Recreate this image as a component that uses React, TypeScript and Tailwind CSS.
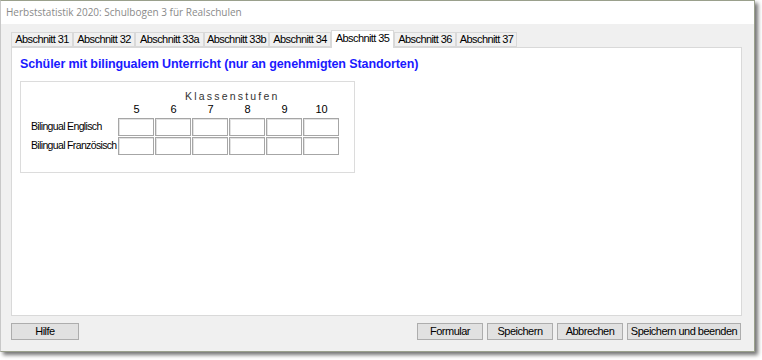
import React from "react";

const tabs = ["Abschnitt 31", "Abschnitt 32", "Abschnitt 33a", "Abschnitt 33b", "Abschnitt 34", "Abschnitt 35", "Abschnitt 36", "Abschnitt 37"];
const tabW = [62, 62, 69, 65, 62, 63, 62, 61];
const cols = ["5", "6", "7", "8", "9", "10"];

function Cell() {
  return <div className="w-[36px] h-[18px] bg-white border border-[#a6a6a6] shadow-[inset_1px_1px_0_#e3e3e3]" />;
}

function Btn({ label, w }: { label: string; w: string }) {
  return (
    <div className={`${w} h-[17px] bg-[#e1e1e1] border border-[#adadad] flex items-center justify-center text-[11px] tracking-[-0.5px] text-black`}>
      {label}
    </div>
  );
}

export default function App() {
  return (
    <div className="w-[762px] h-[360px] bg-white relative overflow-hidden" style={{ fontFamily: '"Liberation Sans", Arial, sans-serif' }}>
      <div className="w-[755px] h-[352px] border border-[#9aa08c] border-l-[#c8c8c8] bg-[#f0f0f0] shadow-[3px_3px_4px_rgba(0,0,0,0.55)] flex flex-col">
        <div className="h-[23px] bg-white flex items-center pl-[5px] text-[10px] text-[#8a8a8a]" style={{ fontFamily: '"Open Sans", "Noto Sans", sans-serif' }}>
          Herbststatistik 2020: Schulbogen 3 für Realschulen
        </div>
        <div className="flex-1 flex flex-col pl-[10px] pr-[12px] pt-[6px]">
          <div className="flex items-end h-[17px]">
            {tabs.map((t, i) => {
              const sel = i === 5;
              return (
                <div
                  key={t}
                  style={{ width: tabW[i] }}
                  className={
                    sel
                      ? "h-[18px] -mb-[1px] bg-white border border-b-0 border-[#d9d9d9] flex items-center justify-center text-[11px] tracking-[-0.6px] text-black relative z-10 pb-[2px]"
                      : "h-[15px] bg-[#f0f0f0] border border-[#d9d9d9] flex items-center justify-center text-[11px] tracking-[-0.6px] text-black"
                  }
                >
                  {t}
                </div>
              );
            })}
          </div>
          <div className="h-[269px] bg-white border border-[#d9d9d9] pl-[8px] pt-[8px]">
            <div className="text-[12.5px] font-bold text-[#1a1aff] tracking-[-0.1px] leading-[16px]">
              Schüler mit bilingualem Unterricht (nur an genehmigten Standorten)
            </div>
            <div className="mt-[9px] w-[335px] h-[92px] border border-[#dcdcdc] pt-[8px]">
              <div className="text-[10.5px] tracking-[2.2px] text-[#333] pl-[164px] leading-[12px]">Klassenstufen</div>
              <div className="flex pl-[97px] mt-[1px] leading-[13px] text-[11px] text-black">
                {cols.map((c) => (
                  <div key={c} className="w-[37px] text-center">{c}</div>
                ))}
              </div>
              <div className="flex flex-col gap-[1px] mt-[2px]">
                {["Bilingual Englisch", "Bilingual Französisch"].map((r) => (
                  <div key={r} className="flex items-center">
                    <div className="w-[97px] pl-[10px] text-[10.5px] tracking-[-0.65px] text-black whitespace-nowrap">{r}</div>
                    <div className="flex gap-[1px]">
                      {cols.map((c) => (
                        <Cell key={c} />
                      ))}
                    </div>
                  </div>
                ))}
              </div>
            </div>
          </div>
          <div className="flex items-center mt-[7px]">
            <Btn label="Hilfe" w="w-[68px]" />
            <div className="flex-1" />
            <div className="flex gap-[4px] mr-[1px]">
              <Btn label="Formular" w="w-[66px]" />
              <Btn label="Speichern" w="w-[66px]" />
              <Btn label="Abbrechen" w="w-[66px]" />
              <Btn label="Speichern und beenden" w="w-[114px]" />
            </div>
          </div>
        </div>
      </div>
    </div>
  );
}
